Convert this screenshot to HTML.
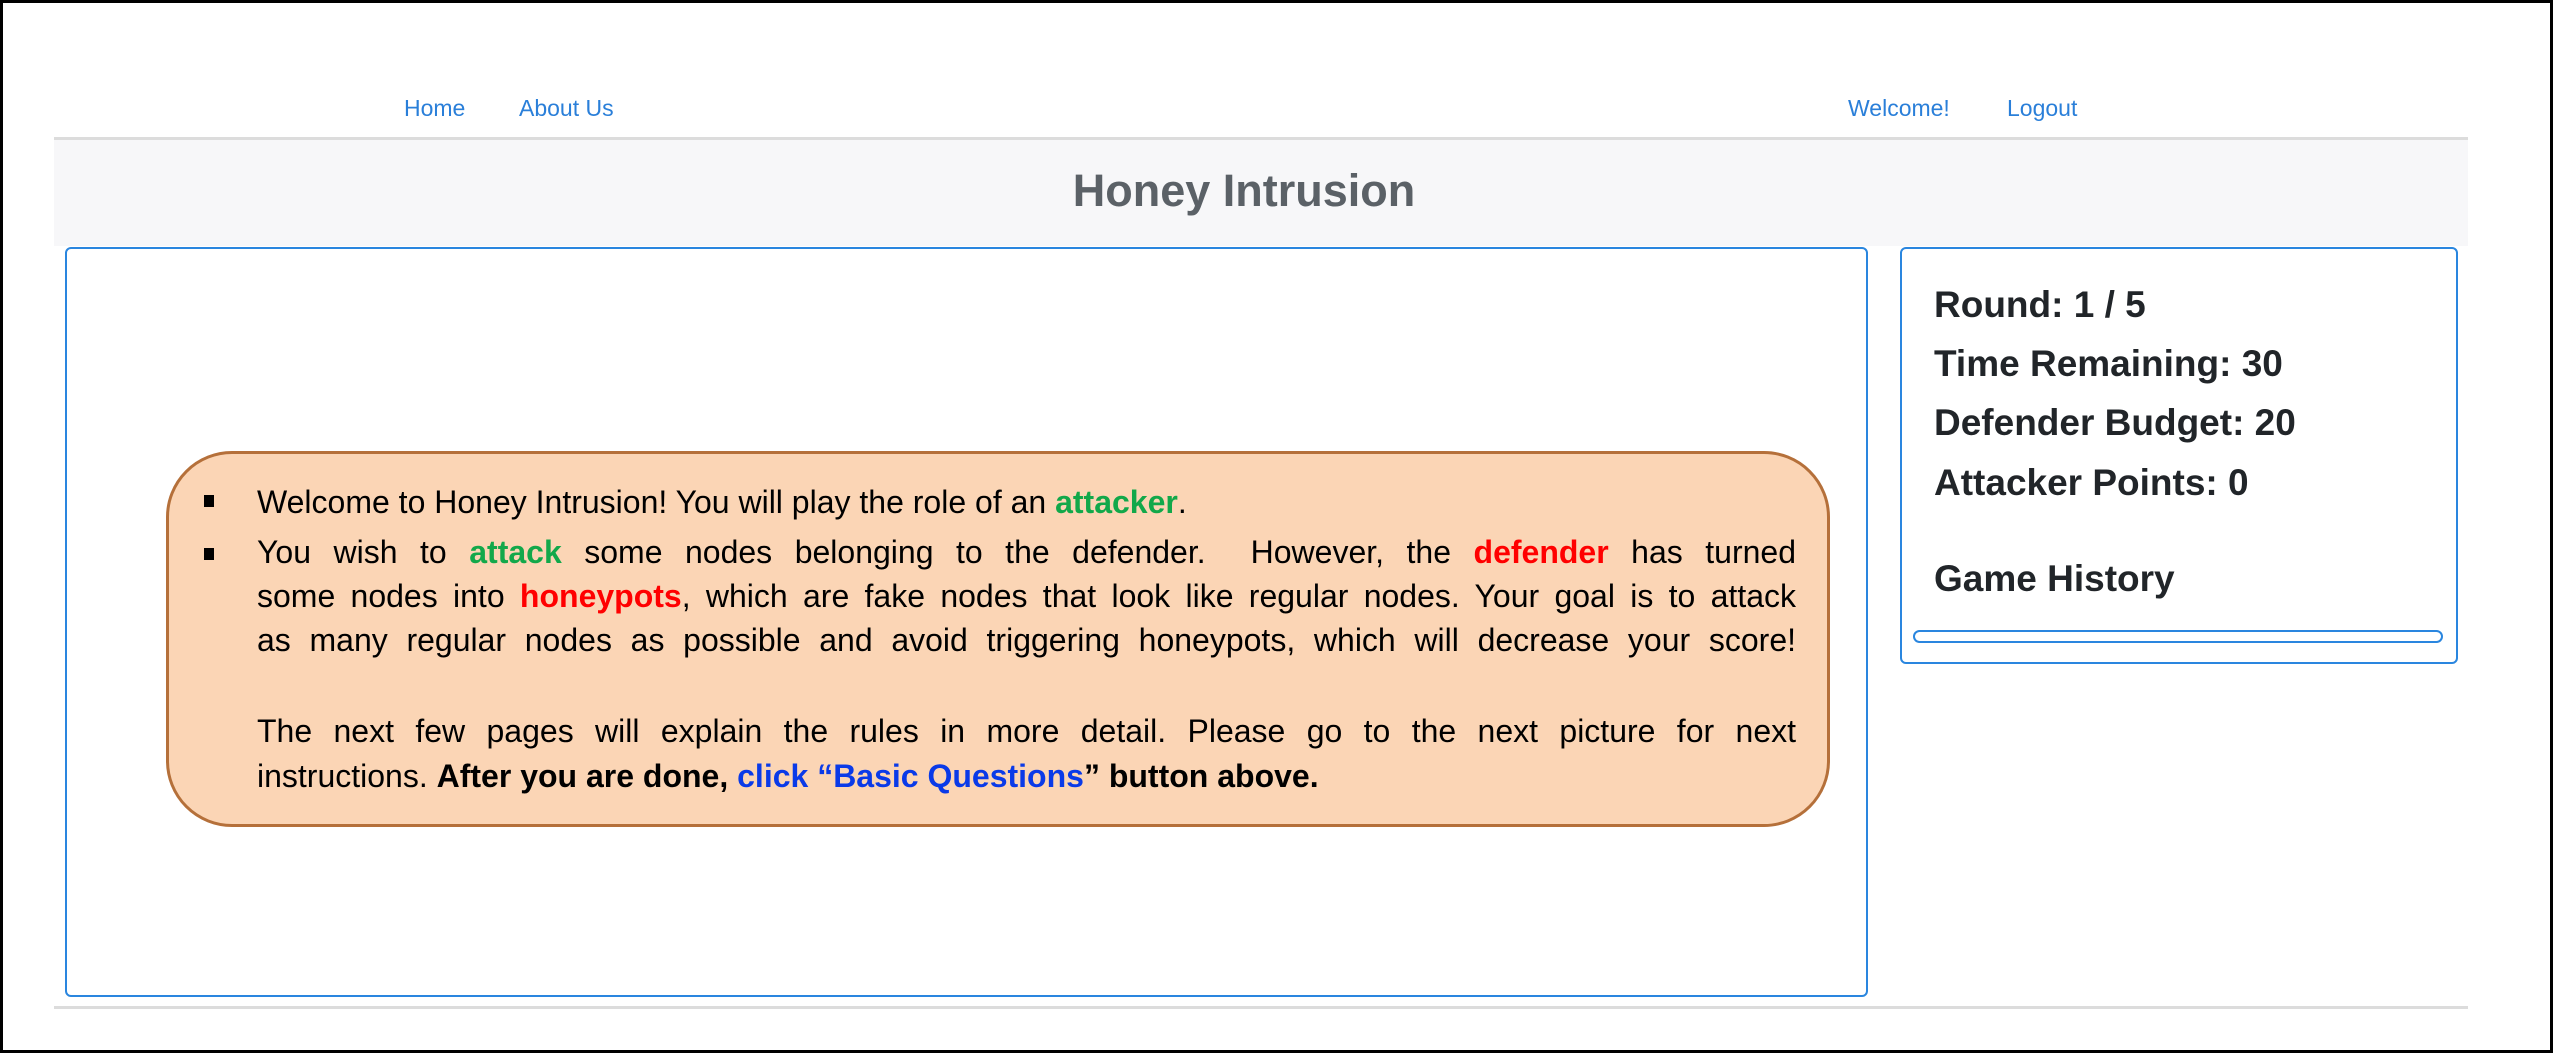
<!DOCTYPE html>
<html><head><meta charset="utf-8"><style>
html,body{margin:0;padding:0;}
body{width:2553px;height:1053px;position:relative;background:#fff;overflow:hidden;font-family:"Liberation Sans",sans-serif;}
.frame{position:absolute;left:0;top:0;width:2547px;height:1047px;border:3px solid #000;}
.nav{position:absolute;top:95px;font-size:23px;color:#2a7fd9;}
.line{position:absolute;left:54px;width:2414px;background:#dcdcdc;}
.hdr{position:absolute;left:54px;top:140px;width:2414px;height:106px;background:#f7f7f9;}
.title{position:absolute;left:1044px;width:400px;top:165px;text-align:center;font-size:45px;font-weight:bold;color:#5b6167;}
.panel{position:absolute;border:2px solid #2a86df;border-radius:6px;box-sizing:border-box;background:#fff;}
.box{position:absolute;left:166px;top:451px;width:1664px;height:376px;box-sizing:border-box;background:#fbd5b5;border:3px solid #b5703a;border-radius:66px;}
.t{position:absolute;left:257px;width:1539px;font-size:32px;color:#000;}
.j{text-align:justify;text-align-last:justify;}
.b{position:absolute;left:204px;width:10px;height:12px;background:#000;}
.g{color:#12a84a;font-weight:bold}.r{color:#f00;font-weight:bold}.bl{color:#0a3ae8;font-weight:bold}
.s{position:absolute;left:1934px;font-size:37px;font-weight:bold;color:#212529;}
</style></head><body>
<div class="frame"></div>
<div class="nav" style="left:404px">Home</div>
<div class="nav" style="left:519px">About Us</div>
<div class="nav" style="left:1848px">Welcome!</div>
<div class="nav" style="left:2007px">Logout</div>
<div class="line" style="top:137px;height:3px"></div>
<div class="hdr"></div>
<div class="title">Honey Intrusion</div>
<div class="line" style="top:1006px;height:3px"></div>
<div class="panel" style="left:65px;top:247px;width:1803px;height:750px"></div>
<div class="panel" style="left:1900px;top:247px;width:558px;height:417px"></div>
<div class="panel" style="left:1913px;top:630px;width:530px;height:13px;border-radius:7px"></div>
<div class="s" style="top:284px">Round: 1 / 5</div>
<div class="s" style="top:343px">Time Remaining: 30</div>
<div class="s" style="top:402px">Defender Budget: 20</div>
<div class="s" style="top:462px">Attacker Points: 0</div>
<div class="s" style="top:558px">Game History</div>
<div class="box"></div>
<div class="b" style="top:495px"></div>
<div class="b" style="top:548px"></div>
<div class="t" style="top:484px">Welcome to Honey Intrusion! You will play the role of an <span class="g">attacker</span>.</div>
<div class="t j" style="top:534px">You wish to <span class="g">attack</span> some nodes belonging to the defender.&nbsp; However, the <span class="r">defender</span> has turned</div>
<div class="t j" style="top:578px">some nodes into <span class="r">honeypots</span>, which are fake nodes that look like regular nodes. Your goal is to attack</div>
<div class="t j" style="top:622px">as many regular nodes as possible and avoid triggering honeypots, which will decrease your score!</div>
<div class="t j" style="top:713px">The next few pages will explain the rules in more detail. Please go to the next picture for next</div>
<div class="t" style="top:758px">instructions. <b>After you are done, <span class="bl">click “Basic Questions</span>” button above.</b></div>
</body></html>
